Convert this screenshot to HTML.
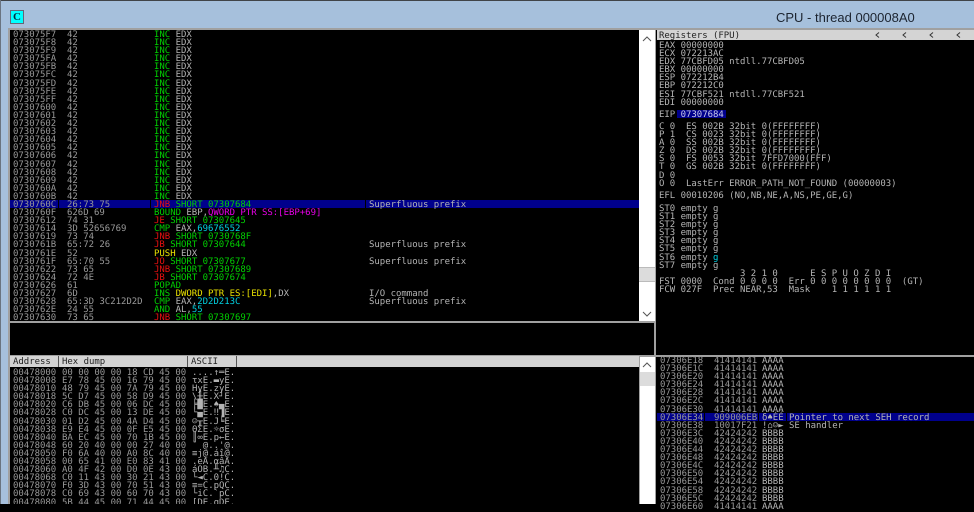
<!DOCTYPE html>
<html><head><meta charset="utf-8"><title>CPU</title>
<style>
html,body{margin:0;padding:0;background:#000;}
body{width:974px;height:504px;position:relative;overflow:hidden;}
.a{position:absolute;}
pre{position:absolute;margin:1px 0 0;font:9px/8.09px "DejaVu Sans Mono","Liberation Mono",monospace;letter-spacing:-.02px;color:#b4b4b4;text-rendering:geometricPrecision;white-space:pre;}
.ad{color:#989898;}
.g{color:#00d000;}.r{color:#e81010;}.y{color:#e8e000;}.m{color:#e800e8;}.c{color:#00d0e0;}
.hd{font:9px/12px "DejaVu Sans Mono","Liberation Mono",monospace;color:#222;background:#d4d4d4;height:11px;border-right:1px solid #555;box-sizing:border-box;padding-left:3px;letter-spacing:-.02px;overflow:hidden;}
</style></head>
<body>
<div class="a" style="left:0;top:0;width:974px;height:504px;background:#a6c0dc;"></div>
<div class="a" style="left:0;top:0;width:974px;height:1px;background:#404448;"></div>
<div class="a" style="left:0;top:0;width:1px;height:504px;background:#6a7480;"></div>
<div class="a" style="left:10px;top:10px;width:14px;height:14px;background:#00ffff;border:1px solid #667;box-sizing:border-box;font:bold 11px/12px 'Liberation Serif',serif;text-align:center;color:#003040;">C</div>
<div class="a" style="left:776px;top:9px;font:13px/18px 'Liberation Sans',sans-serif;color:#1c2430;">CPU - thread 000008A0</div>

<div class="a" style="left:8px;top:28px;width:966px;height:476px;background:#a0a0a0;"></div>
<div class="a" style="left:10px;top:30px;width:629px;height:291px;background:#000;overflow:hidden;"></div>
<div class="a" style="left:10px;top:323px;width:644px;height:32px;background:#000;"></div>
<div class="a" style="left:656px;top:30px;width:318px;height:325px;background:#000;"></div>
<div class="a" style="left:10px;top:357px;width:629px;height:147px;background:#000;"></div>
<div class="a" style="left:656px;top:357px;width:318px;height:147px;background:#000;"></div>

<!-- CPU scrollbar -->
<div class="a" style="left:639px;top:30px;width:16px;height:291px;background:#fff;"></div>
<div class="a" style="left:639px;top:267px;width:16px;height:15px;background:#dcdcdc;border-top:1px solid #bbb;border-bottom:1px solid #bbb;box-sizing:border-box;"></div>
<svg class="a" style="left:639px;top:30px" width="16" height="291"><path d="M4 11l4-4 4 4" fill="none" stroke="#555" stroke-width="1"/><path d="M4 282l4 4 4-4" fill="none" stroke="#555" stroke-width="1"/></svg>
<!-- stack scrollbar -->
<div class="a" style="left:640px;top:357px;width:15px;height:147px;background:#fff;"></div>
<div class="a" style="left:640px;top:372px;width:15px;height:14px;background:#dcdcdc;"></div>
<svg class="a" style="left:640px;top:357px" width="15" height="14"><path d="M3 10l4-4 4 4" fill="none" stroke="#555" stroke-width="1"/></svg>

<!-- selected CPU row -->
<div class="a" style="left:10px;top:200px;width:629px;height:8px;background:#00008c;"></div>
<div class="a" style="left:58px;top:200px;width:1px;height:8px;background:#000;"></div>
<div class="a" style="left:150px;top:200px;width:1px;height:8px;background:#000;"></div>
<div class="a" style="left:365px;top:200px;width:1px;height:8px;background:#000;"></div>

<div class="a" style="left:0;top:30px;width:639px;height:291px;overflow:hidden;">
<pre class="ad" style="left:13px;top:0">073075F7
073075F8
073075F9
073075FA
073075FB
073075FC
073075FD
073075FE
073075FF
07307600
07307601
07307602
07307603
07307604
07307605
07307606
07307607
07307608
07307609
0730760A
0730760B
0730760C
0730760F
07307612
07307614
07307619
0730761B
0730761E
0730761F
07307622
07307624
07307626
07307627
07307628
0730762E
07307630</pre>
<pre style="left:67px;top:0;color:#989898">42
42
42
42
42
42
42
42
42
42
42
42
42
42
42
42
42
42
42
42
42
26:73 75
626D 69
74 31
3D 52656769
73 74
65:72 26
52
65:70 55
73 65
72 4E
61
6D
65:3D 3C212D2D
24 55
73 65</pre>
<pre style="left:154px;top:0"><span class="g">INC</span> EDX
<span class="g">INC</span> EDX
<span class="g">INC</span> EDX
<span class="g">INC</span> EDX
<span class="g">INC</span> EDX
<span class="g">INC</span> EDX
<span class="g">INC</span> EDX
<span class="g">INC</span> EDX
<span class="g">INC</span> EDX
<span class="g">INC</span> EDX
<span class="g">INC</span> EDX
<span class="g">INC</span> EDX
<span class="g">INC</span> EDX
<span class="g">INC</span> EDX
<span class="g">INC</span> EDX
<span class="g">INC</span> EDX
<span class="g">INC</span> EDX
<span class="g">INC</span> EDX
<span class="g">INC</span> EDX
<span class="g">INC</span> EDX
<span class="g">INC</span> EDX
<span class="r">JNB</span> <span class="g">SHORT 07307684</span>
<span class="g">BOUND</span> EBP,<span class="m">QWORD PTR SS:[EBP+69]</span>
<span class="r">JE</span> <span class="g">SHORT 07307645</span>
<span class="g">CMP</span> EAX,<span class="c">69676552</span>
<span class="r">JNB</span> <span class="g">SHORT 0730768F</span>
<span class="r">JB</span> <span class="g">SHORT 07307644</span>
<span class="y">PUSH</span> EDX
<span class="r">JO</span> <span class="g">SHORT 07307677</span>
<span class="r">JNB</span> <span class="g">SHORT 07307689</span>
<span class="r">JB</span> <span class="g">SHORT 07307674</span>
<span class="g">POPAD</span>
<span class="g">INS</span> <span class="y">DWORD PTR ES:[EDI]</span>,DX
<span class="g">CMP</span> EAX,<span class="c">2D2D213C</span>
<span class="g">AND</span> AL,<span class="c">55</span>
<span class="r">JNB</span> <span class="g">SHORT 07307697</span></pre>
<pre style="left:369px;top:0">




















 
Superfluous prefix




Superfluous prefix

Superfluous prefix



I/O command
Superfluous prefix</pre>
</div>

<!-- Dump header -->
<div class="a" style="left:10px;top:356px;width:629px;height:11px;background:#d4d4d4;"></div>
<div class="a hd" style="left:10px;top:356px;width:49px;">Address</div>
<div class="a hd" style="left:59px;top:356px;width:129px;">Hex dump</div>
<div class="a hd" style="left:188px;top:356px;width:49px;">ASCII</div>

<div class="a" style="left:0;top:368px;width:639px;height:136px;overflow:hidden;">
<pre class="ad" style="left:13px;top:0">00478000
00478008
00478010
00478018
00478020
00478028
00478030
00478038
00478040
00478048
00478050
00478058
00478060
00478068
00478070
00478078
00478080</pre>
<pre style="left:62px;top:0;color:#989898">00 00 00 00 18 CD 45 00
E7 78 45 00 16 79 45 00
48 79 45 00 7A 79 45 00
5C D7 45 00 58 D9 45 00
C6 DB 45 00 06 DC 45 00
C0 DC 45 00 13 DE 45 00
01 D2 45 00 4A D4 45 00
E9 E4 45 00 0F E5 45 00
BA EC 45 00 70 1B 45 00
60 20 40 00 00 27 40 00
F0 6A 40 00 A0 8C 40 00
00 65 41 00 E0 83 41 00
A0 4F 42 00 D0 0E 43 00
C0 11 43 00 30 21 43 00
F0 3D 43 00 70 51 43 00
C0 69 43 00 60 70 43 00
5B 44 45 00 71 44 45 00</pre>
<pre style="left:192px;top:0">....↑═E.
τxE.▬yE.
HyE.zyE.
\╫E.X┘E.
╞█E.♠▄E.
└▄E.‼▐E.
☺╥E.J╘E.
ΘΣE.☼σE.
║∞E.p←E.
` @..'@.
≡j@.áî@.
.eA.αâA.
áOB.╨♫C.
└◄C.0!C.
≡=C.pQC.
└iC.`pC.
[DE.qDE.</pre>
</div>

<!-- Registers -->
<div class="a" style="left:657px;top:30px;width:317px;height:10px;background:#d4d4d4;"></div>
<div class="a" style="left:659px;top:30px;height:10px;overflow:hidden;font:9px/12px 'DejaVu Sans Mono',monospace;color:#222;letter-spacing:-.02px;">Registers (FPU)</div>
<svg class="a" style="left:870px;top:30px" width="100" height="10"><path d="M9 2.5l-3 2.5 3 2.5M36 2.5l-3 2.5 3 2.5M63 2.5l-3 2.5 3 2.5M90 2.5l-3 2.5 3 2.5" fill="none" stroke="#333" stroke-width="1"/></svg>

<div class="a" style="left:677px;top:110px;width:49px;height:8px;background:#00008c;"></div>
<pre style="left:659px;top:41px">EAX 00000000
ECX 072213AC
EDX 77CBFD05 ntdll.77CBFD05
EBX 00000000
ESP 072212B4
EBP 072212C0
ESI 77CBF521 ntdll.77CBF521
EDI 00000000</pre>
<pre style="left:659px;top:110px">EIP <span style="color:#c8c8e8">07307684</span></pre>
<pre style="left:659px;top:122px">C 0  ES 002B 32bit 0(FFFFFFFF)
P 1  CS 0023 32bit 0(FFFFFFFF)
A 0  SS 002B 32bit 0(FFFFFFFF)
Z 0  DS 002B 32bit 0(FFFFFFFF)
S 0  FS 0053 32bit 7FFD7000(FFF)
T 0  GS 002B 32bit 0(FFFFFFFF)
D 0
O 0  LastErr ERROR_PATH_NOT_FOUND (00000003)</pre>
<pre style="left:659px;top:191px">EFL 00010206 (NO,NB,NE,A,NS,PE,GE,G)</pre>
<pre style="left:659px;top:204px">ST0 empty g
ST1 empty g
ST2 empty g
ST3 empty g
ST4 empty g
ST5 empty g
ST6 empty <span class="c">g</span>
ST7 empty g
               3 2 1 0      E S P U O Z D I
FST 0000  Cond 0 0 0 0  Err 0 0 0 0 0 0 0 0  (GT)
FCW 027F  Prec NEAR,53  Mask    1 1 1 1 1 1</pre>

<!-- Stack -->
<div class="a" style="left:657px;top:413px;width:317px;height:8px;background:#00008c;"></div>
<div class="a" style="left:704px;top:413px;width:1px;height:8px;background:#000;"></div>
<div class="a" style="left:758px;top:413px;width:1px;height:8px;background:#000;"></div>
<div class="a" style="left:786px;top:413px;width:1px;height:8px;background:#000;"></div>
<pre class="ad" style="left:660px;top:356px">07306E18
07306E1C
07306E20
07306E24
07306E28
07306E2C
07306E30
07306E34
07306E38
07306E3C
07306E40
07306E44
07306E48
07306E4C
07306E50
07306E54
07306E58
07306E5C
07306E60</pre>
<pre style="left:714px;top:356px;color:#989898">41414141
41414141
41414141
41414141
41414141
41414141
41414141
909006EB
10017F21
42424242
42424242
42424242
42424242
42424242
42424242
42424242
42424242
42424242
41414141</pre>
<pre style="left:762px;top:356px">AAAA
AAAA
AAAA
AAAA
AAAA
AAAA
AAAA
δ♠ÉÉ
!⌂☺►
BBBB
BBBB
BBBB
BBBB
BBBB
BBBB
BBBB
BBBB
BBBB
AAAA</pre>
<pre style="left:789px;top:356px">






 
Pointer to next SEH record
SE handler</pre>
</body></html>
